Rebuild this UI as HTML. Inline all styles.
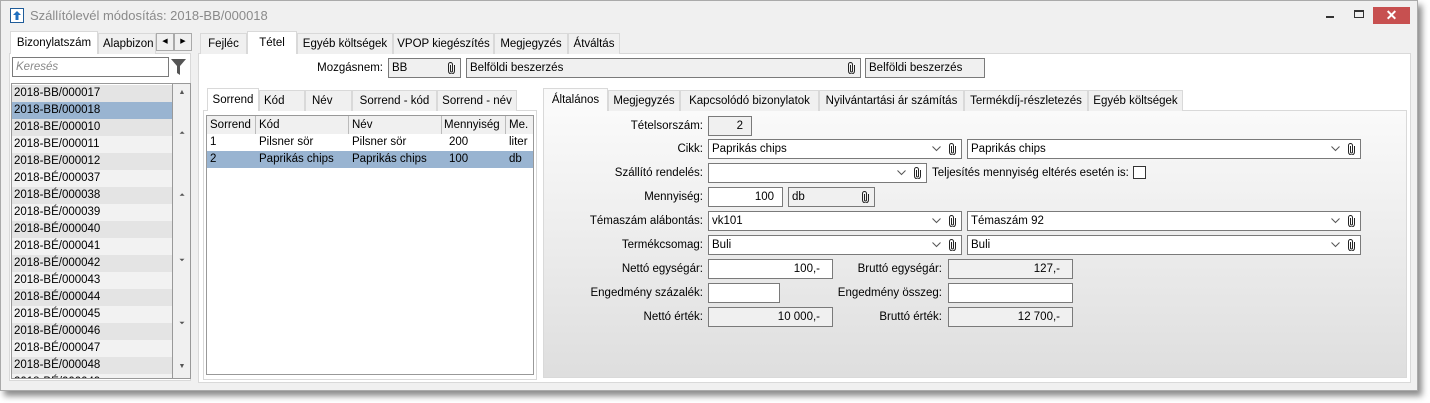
<!DOCTYPE html>
<html><head><meta charset="utf-8"><style>
*{box-sizing:border-box;margin:0;padding:0}
body{width:1430px;height:403px;background:#fff;font-family:"Liberation Sans",sans-serif;font-size:11.5px;color:#000;position:relative;overflow:hidden}
.a{position:absolute}
.win{left:0;top:0;width:1418px;height:391px;background:#f0f0f0;border:1px solid #aaa;box-shadow:4px 5px 6px rgba(0,0,0,.45)}
.tab{position:absolute;height:21px;border:1px solid #d9d9d9;border-bottom:none;background:#f0f0f0;line-height:20px;text-align:center;white-space:nowrap}
.tab.on{background:#fff;height:23px;line-height:22px;border-color:#d9d9d9;z-index:2}
.fld{position:absolute;height:20px;border:1px solid #7a7a7a;background:#fff;line-height:18px;padding:0 3px;white-space:nowrap;overflow:hidden}
.g{background:#f0f0f0}
.r{text-align:right;padding-right:8px}
.lbl{position:absolute;text-align:right;line-height:20px;white-space:nowrap}
.clip{position:absolute;right:5px;top:3px;width:7px;height:12px}
.dd{position:absolute;right:20px;top:6px;width:9px;height:6px}
.row{position:absolute;left:0;width:160px;height:17px;line-height:17px;padding-left:2px}
</style></head><body>
<svg width="0" height="0" style="position:absolute"><defs>
<symbol id="cl" viewBox="0 0 7 12"><path d="M2.5 3 V9 A1 1 0 0 0 4.5 9 V2.5 A2 2 0 0 0 0.5 2.5 V9 A3 3 0 0 0 6.5 9 V3" fill="none" stroke="#222" stroke-width="1"/></symbol>
<symbol id="dv" viewBox="0 0 9 6"><path d="M0.5 0.5 L4.5 4.5 L8.5 0.5" fill="none" stroke="#555" stroke-width="1"/></symbol>
</defs></svg>
<div class="a win"></div>
<svg class="a" style="left:10px;top:8px" width="14" height="15"><rect x="0.5" y="0.5" width="13" height="14" fill="#fff" stroke="#1f5c99"/><path d="M7 3 L11 7 L8.5 7 L8.5 12 L5.5 12 L5.5 7 L3 7Z" fill="#1f6fc0"/></svg>
<div class="a" style="left:30px;top:8px;font-size:13px;color:#8a8a8a">Szállítólevél módosítás: 2018-BB/000018</div>
<div class="a" style="left:1326px;top:16px;width:8px;height:2px;background:#333"></div>
<div class="a" style="left:1354px;top:10px;width:10px;height:8px;border:1px solid #333;border-top-width:2px"></div>
<div class="a" style="left:1373px;top:7px;width:37px;height:17px;background:#c75050;color:#fff;text-align:center;line-height:17px;font-size:14px;font-weight:bold">✕</div>

<div class="a" style="left:9px;top:53px;width:182px;height:328px;border:1px solid #d9d9d9;background:#fff"></div>
<div class="tab on" style="left:10px;top:31px;width:88px">Bizonylatszám</div>
<div class="tab" style="left:98px;top:33px;width:58px;text-align:left;padding-left:4px;overflow:hidden">Alapbizon</div>
<div class="tab" style="left:156px;top:33px;width:18px;height:18px;border:1px solid #aaa;font-size:7px;line-height:16px">◀</div>
<div class="tab" style="left:174px;top:33px;width:18px;height:18px;border:1px solid #aaa;font-size:7px;line-height:16px">▶</div>
<div class="fld" style="left:12px;top:57px;width:157px;color:#888;font-style:italic">Keresés</div>
<svg class="a" style="left:171px;top:59px" width="15" height="16"><path d="M0 0 H15 L9 7 V16 L6 14 V7Z" fill="#555"/></svg>
<div class="a" style="left:11px;top:83px;width:180px;height:296px;border:1px solid #999;background:#fff;overflow:hidden">
<div class="a" style="left:0;top:0;width:161px;height:296px">
<div class="row" style="top:1px;background:#e4e4e4">2018-BB/000017</div>
<div class="row" style="top:18px;background:#99b4d1">2018-BB/000018</div>
<div class="row" style="top:35px;background:#e4e4e4">2018-BE/000010</div>
<div class="row" style="top:52px;background:#f2f2f2">2018-BE/000011</div>
<div class="row" style="top:69px;background:#e4e4e4">2018-BE/000012</div>
<div class="row" style="top:86px;background:#f2f2f2">2018-BÉ/000037</div>
<div class="row" style="top:103px;background:#e4e4e4">2018-BÉ/000038</div>
<div class="row" style="top:120px;background:#f2f2f2">2018-BÉ/000039</div>
<div class="row" style="top:137px;background:#e4e4e4">2018-BÉ/000040</div>
<div class="row" style="top:154px;background:#f2f2f2">2018-BÉ/000041</div>
<div class="row" style="top:171px;background:#e4e4e4">2018-BÉ/000042</div>
<div class="row" style="top:188px;background:#f2f2f2">2018-BÉ/000043</div>
<div class="row" style="top:205px;background:#e4e4e4">2018-BÉ/000044</div>
<div class="row" style="top:222px;background:#f2f2f2">2018-BÉ/000045</div>
<div class="row" style="top:239px;background:#e4e4e4">2018-BÉ/000046</div>
<div class="row" style="top:256px;background:#f2f2f2">2018-BÉ/000047</div>
<div class="row" style="top:273px;background:#e4e4e4">2018-BÉ/000048</div>
<div class="row" style="top:290px;background:#f2f2f2">2018-BÉ/000049</div>
</div>
<div class="a" style="left:160px;top:0;width:1px;height:296px;background:#999"></div>
<div class="a" style="left:161px;top:0;width:18px;height:296px;background:#f0f0f0;color:#555;font-size:7px;text-align:center">
<div class="a" style="left:0;width:18px;top:5px">▲</div>
<div class="a" style="left:0;width:18px;top:46px">⏶</div>
<div class="a" style="left:0;width:18px;top:108px">⏶</div>
<div class="a" style="left:0;width:18px;top:173px">⏷</div>
<div class="a" style="left:0;width:18px;top:236px">⏷</div>
<div class="a" style="left:0;width:18px;top:279px">▼</div>
</div>
</div>

<div class="a" style="left:198px;top:53px;width:1213px;height:330px;border:1px solid #d9d9d9;background:#fff"></div>
<div class="tab" style="left:200px;top:33px;width:47px">Fejléc</div>
<div class="tab on" style="left:247px;top:31px;width:50px">Tétel</div>
<div class="tab" style="left:297px;top:33px;width:96px">Egyéb költségek</div>
<div class="tab" style="left:393px;top:33px;width:101px">VPOP kiegészítés</div>
<div class="tab" style="left:494px;top:33px;width:74px">Megjegyzés</div>
<div class="tab" style="left:568px;top:33px;width:52px">Átváltás</div>
<div class="lbl" style="left:280px;top:58px;width:103px">Mozgásnem:</div>
<div class="fld g" style="left:388px;top:58px;width:73px">BB<svg class="clip"><use href="#cl"/></svg></div>
<div class="fld g" style="left:466px;top:58px;width:395px">Belföldi beszerzés<svg class="clip"><use href="#cl"/></svg></div>
<div class="fld g" style="left:865px;top:58px;width:120px">Belföldi beszerzés</div>

<div class="a" style="left:203px;top:110px;width:334px;height:270px;border:1px solid #d9d9d9;background:#fff"></div>
<div class="tab on" style="left:207px;top:88px;width:52px">Sorrend</div>
<div class="tab" style="left:259px;top:90px;width:46px;text-align:left;padding-left:4px">Kód</div>
<div class="tab" style="left:305px;top:90px;width:47px;text-align:left;padding-left:6px">Név</div>
<div class="tab" style="left:352px;top:90px;width:85px">Sorrend - kód</div>
<div class="tab" style="left:437px;top:90px;width:80px">Sorrend - név</div>
<div class="a" style="left:206px;top:115px;width:328px;height:260px;border:1px solid #999;background:#fff">
<div class="a" style="left:0;top:0;width:326px;height:18px;background:#f0f0f0;line-height:18px">
<span class="a" style="left:3px">Sorrend</span><span class="a" style="left:48px;border-left:1px solid #bbb;padding-left:3px">Kód</span><span class="a" style="left:141px;border-left:1px solid #bbb;padding-left:3px">Név</span><span class="a" style="left:234px;border-left:1px solid #bbb;padding-left:2px">Mennyiség</span><span class="a" style="left:298px;border-left:1px solid #bbb;padding-left:3px">Me.</span></div>
<div class="a" style="left:0;top:18px;width:326px;height:17px;line-height:17px"><span class="a" style="left:3px">1</span><span class="a" style="left:52px">Pilsner sör</span><span class="a" style="left:145px">Pilsner sör</span><span class="a" style="left:242px">200</span><span class="a" style="left:302px">liter</span></div>
<div class="a" style="left:0;top:35px;width:326px;height:17px;line-height:17px;background:#99b4d1"><span class="a" style="left:3px">2</span><span class="a" style="left:52px">Paprikás chips</span><span class="a" style="left:145px">Paprikás chips</span><span class="a" style="left:242px">100</span><span class="a" style="left:302px">db</span></div>
</div>

<div class="a" style="left:543px;top:110px;width:864px;height:268px;border:1px solid #d9d9d9;background:linear-gradient(#fafafa,#dedede)"></div>
<div class="tab on" style="left:543px;top:88px;width:65px;background:#fafafa">Általános</div>
<div class="tab" style="left:608px;top:90px;width:72px">Megjegyzés</div>
<div class="tab" style="left:680px;top:90px;width:139px">Kapcsolódó bizonylatok</div>
<div class="tab" style="left:819px;top:90px;width:145px">Nyilvántartási ár számítás</div>
<div class="tab" style="left:964px;top:90px;width:124px">Termékdíj-részletezés</div>
<div class="tab" style="left:1088px;top:90px;width:95px">Egyéb költségek</div>

<div class="lbl" style="left:540px;top:116px;width:163px">Tételsorszám:</div>
<div class="fld g r" style="left:708px;top:116px;width:44px">2</div>
<div class="lbl" style="left:540px;top:139px;width:163px">Cikk:</div>
<div class="fld" style="left:708px;top:139px;width:254px">Paprikás chips<svg class="dd"><use href="#dv"/></svg><svg class="clip"><use href="#cl"/></svg></div>
<div class="fld" style="left:967px;top:139px;width:394px">Paprikás chips<svg class="dd"><use href="#dv"/></svg><svg class="clip"><use href="#cl"/></svg></div>
<div class="lbl" style="left:540px;top:163px;width:163px">Szállító rendelés:</div>
<div class="fld" style="left:708px;top:163px;width:219px"><svg class="dd"><use href="#dv"/></svg><svg class="clip"><use href="#cl"/></svg></div>
<div class="lbl" style="left:932px;top:163px;text-align:left">Teljesítés mennyiség eltérés esetén is:</div>
<div class="a" style="left:1133px;top:166px;width:13px;height:13px;border:1px solid #333;background:#fff"></div>
<div class="lbl" style="left:540px;top:187px;width:163px">Mennyiség:</div>
<div class="fld r" style="left:708px;top:187px;width:75px">100</div>
<div class="fld g" style="left:788px;top:187px;width:87px">db<svg class="clip"><use href="#cl"/></svg></div>
<div class="lbl" style="left:540px;top:211px;width:163px">Témaszám alábontás:</div>
<div class="fld" style="left:708px;top:211px;width:254px">vk101<svg class="dd"><use href="#dv"/></svg><svg class="clip"><use href="#cl"/></svg></div>
<div class="fld" style="left:967px;top:211px;width:394px">Témaszám 92<svg class="dd"><use href="#dv"/></svg><svg class="clip"><use href="#cl"/></svg></div>
<div class="lbl" style="left:540px;top:235px;width:163px">Termékcsomag:</div>
<div class="fld" style="left:708px;top:235px;width:254px">Buli<svg class="dd"><use href="#dv"/></svg><svg class="clip"><use href="#cl"/></svg></div>
<div class="fld" style="left:967px;top:235px;width:394px">Buli<svg class="dd"><use href="#dv"/></svg><svg class="clip"><use href="#cl"/></svg></div>
<div class="lbl" style="left:540px;top:259px;width:163px">Nettó egységár:</div>
<div class="fld r" style="left:708px;top:259px;width:125px;padding-right:12px">100,-</div>
<div class="lbl" style="left:780px;top:259px;width:162px">Bruttó egységár:</div>
<div class="fld g r" style="left:948px;top:259px;width:125px;padding-right:12px">127,-</div>
<div class="lbl" style="left:540px;top:283px;width:163px">Engedmény százalék:</div>
<div class="fld" style="left:708px;top:283px;width:72px"></div>
<div class="lbl" style="left:780px;top:283px;width:162px">Engedmény összeg:</div>
<div class="fld" style="left:948px;top:283px;width:125px"></div>
<div class="lbl" style="left:540px;top:307px;width:163px">Nettó érték:</div>
<div class="fld g r" style="left:708px;top:307px;width:125px;padding-right:12px">10 000,-</div>
<div class="lbl" style="left:780px;top:307px;width:162px">Bruttó érték:</div>
<div class="fld g r" style="left:948px;top:307px;width:125px;padding-right:12px">12 700,-</div>
</body></html>
